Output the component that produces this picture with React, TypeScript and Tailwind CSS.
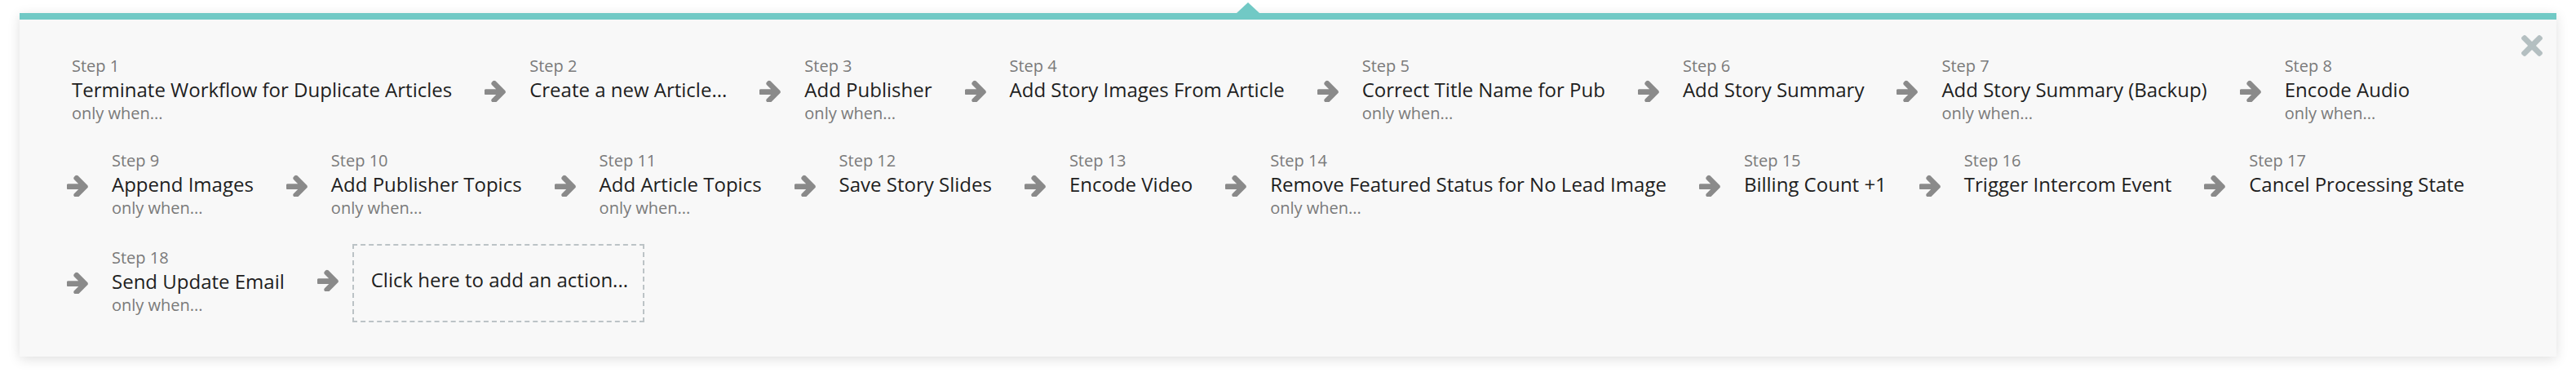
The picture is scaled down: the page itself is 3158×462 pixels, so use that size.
import React from "react";

type Step = { n: number; title: string; when: boolean };

const rows: Step[][] = [
  [
    { n: 1, title: "Terminate Workflow for Duplicate Articles", when: true },
    { n: 2, title: "Create a new Article...", when: false },
    { n: 3, title: "Add Publisher", when: true },
    { n: 4, title: "Add Story Images From Article", when: false },
    { n: 5, title: "Correct Title Name for Pub", when: true },
    { n: 6, title: "Add Story Summary", when: false },
    { n: 7, title: "Add Story Summary (Backup)", when: true },
    { n: 8, title: "Encode Audio", when: true },
  ],
  [
    { n: 9, title: "Append Images", when: true },
    { n: 10, title: "Add Publisher Topics", when: true },
    { n: 11, title: "Add Article Topics", when: true },
    { n: 12, title: "Save Story Slides", when: false },
    { n: 13, title: "Encode Video", when: false },
    { n: 14, title: "Remove Featured Status for No Lead Image", when: true },
    { n: 15, title: "Billing Count +1", when: false },
    { n: 16, title: "Trigger Intercom Event", when: false },
    { n: 17, title: "Cancel Processing State", when: false },
  ],
  [{ n: 18, title: "Send Update Email", when: true }],
];

function Arrow() {
  return (
    <svg
      width="26"
      height="27"
      viewBox="165 143 1435 1505"
      className="shrink-0 mt-[31px]"
      fill="#8a8a8a"
    >
      <path d="M1600 960q0 54-37 91l-651 651q-39 37-91 37-51 0-90-37l-75-75q-38-38-38-91t38-91l293-293h-704q-52 0-84.5-37.5t-32.5-90.5v-128q0-53 32.5-90.5t84.5-37.5h704l-293-294q-38-36-38-90t38-90l75-75q38-38 90-38 53 0 91 38l651 651q37 35 37 90z" />
    </svg>
  );
}

function StepItem({ step, first }: { step: Step; first: boolean }) {
  return (
    <div className={"flex items-start shrink-0 " + (first ? "ml-[6px]" : "")}>
      {!first && <Arrow />}
      <div className={"flex flex-col whitespace-nowrap " + (first ? "" : "ml-[29px]")}>
        <div className="text-[20px] leading-[28px] text-[#7a7a7a]">Step {step.n}</div>
        <div className="text-[24px] leading-[30px] text-[#1e1e1e]">{step.title}</div>
        {step.when && (
          <div className="text-[20px] leading-[28px] text-[#7a7a7a]">only when...</div>
        )}
      </div>
    </div>
  );
}

export default function App() {
  return (
    <div
      className="w-[3158px] h-[462px] bg-white pt-[16px] px-[24px]"
      style={{ fontFamily: '"Open Sans", "Noto Sans", sans-serif' }}
    >
      <div className="relative bg-[#f8f8f8] border-t-[8px] border-[#71c9c5] shadow-[0_3px_14px_rgba(0,0,0,0.13)] pl-[58px] pt-[43px] pb-[42px]">
        <div className="absolute top-[-21px] left-[1492px] w-0 h-0 border-l-[14px] border-r-[14px] border-b-[13px] border-l-transparent border-r-transparent border-b-[#71c9c5]" />
        <button className="absolute top-[19px] right-[17px]" aria-label="close">
          <svg width="26" height="26" viewBox="0 80 352 352" fill="#b4bfc1">
            <path d="M242.72 256l100.07-100.07c12.28-12.28 12.28-32.19 0-44.48l-22.24-22.24c-12.28-12.28-32.19-12.28-44.48 0L176 189.28 75.93 89.21c-12.28-12.28-32.19-12.28-44.48 0L9.21 111.45c-12.28 12.28-12.28 32.19 0 44.48L109.28 256 9.21 356.07c-12.28 12.28-12.28 32.19 0 44.48l22.24 22.24c12.28 12.28 32.2 12.28 44.48 0L176 322.72l100.07 100.07c12.28 12.28 32.2 12.28 44.48 0l22.24-22.24c12.28-12.28 12.28-32.19 0-44.48L242.72 256z" />
          </svg>
        </button>
        <div className="flex flex-col gap-[30px]">
          {rows.map((row, ri) => (
            <div key={ri} className="flex items-start gap-x-[40px] h-[86px] last:h-[96px]">
              {row.map((s, i) => (
                <div key={s.n} className={ri === 2 ? "mt-[3px]" : ""}>
                  <StepItem step={s} first={ri === 0 && i === 0} />
                </div>
              ))}
              {ri === 2 && (
                <div className="flex items-start shrink-0">
                  <Arrow />
                  <div className="ml-[17px] w-[358px] h-[96px] border-2 border-dashed border-[#bcc3c6] pl-[21px] pt-[27px] text-[24px] leading-[30px] text-[#1e1e1e] whitespace-nowrap cursor-pointer">
                    Click here to add an action...
                  </div>
                </div>
              )}
            </div>
          ))}
        </div>
      </div>
    </div>
  );
}
